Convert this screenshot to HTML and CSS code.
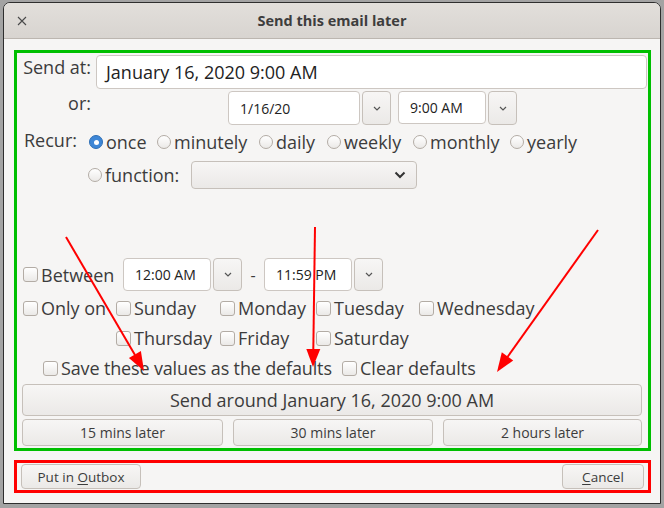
FILE: index.html
```html
<!DOCTYPE html>
<html>
<head>
<meta charset="utf-8">
<link rel="stylesheet" href="styles.css">
</head>
<body>
<div class="window">
  <div class="titlebar">
    <svg class="close" width="10" height="10" viewBox="0 0 10 10"><path d="M1 1L9 9M9 1L1 9" stroke="#4a4a4a" stroke-width="1.1" fill="none"/></svg>
    <span class="title">Send this email later</span>
  </div>
  <div class="content">
    <div class="green">
      <div class="row r-send">
        <div class="lbl">Send at:</div>
        <div class="entry big">January 16, 2020 9:00 AM</div>
      </div>
      <div class="row r-or">
        <div class="lbl">or:</div>
        <div class="pickers">
          <div class="entry small w-date">1/16/20</div>
          <div class="btn drop"><svg width="8" height="5" viewBox="0 0 8 5"><polyline points="1,1 4,4 7,1" fill="none" stroke="#555" stroke-width="1.2"/></svg></div>
          <div class="entry small w-time t-gap">9:00 AM</div>
          <div class="btn drop"><svg width="8" height="5" viewBox="0 0 8 5"><polyline points="1,1 4,4 7,1" fill="none" stroke="#555" stroke-width="1.2"/></svg></div>
        </div>
      </div>
      <div class="row r-recur">
        <div class="lbl-left">Recur:</div>
        <div class="radios">
          <label class="opt w-once"><span class="radio on"></span>once</label>
          <label class="opt w-minutely"><span class="radio"></span>minutely</label>
          <label class="opt w-daily"><span class="radio"></span>daily</label>
          <label class="opt w-weekly"><span class="radio"></span>weekly</label>
          <label class="opt w-monthly"><span class="radio"></span>monthly</label>
          <label class="opt"><span class="radio"></span>yearly</label>
        </div>
      </div>
      <div class="row r-func">
        <label class="opt w-func"><span class="radio"></span>function:</label>
        <div class="btn combo"><svg width="12" height="8" viewBox="0 0 12 8"><polyline points="1.5,1.5 6,6 10.5,1.5" fill="none" stroke="#333" stroke-width="2"/></svg></div>
      </div>
      <div class="row r-between">
        <label class="opt w-between"><span class="check"></span>Between</label>
        <div class="entry small w-time">12:00 AM</div>
        <div class="btn drop"><svg width="8" height="5" viewBox="0 0 8 5"><polyline points="1,1 4,4 7,1" fill="none" stroke="#555" stroke-width="1.2"/></svg></div>
        <span class="dash">-</span>
        <div class="entry small w-time">11:59 PM</div>
        <div class="btn drop"><svg width="8" height="5" viewBox="0 0 8 5"><polyline points="1,1 4,4 7,1" fill="none" stroke="#555" stroke-width="1.2"/></svg></div>
      </div>
      <div class="days">
        <label class="opt"><span class="check"></span>Only on</label>
        <label class="opt"><span class="check"></span>Sunday</label>
        <label class="opt"><span class="check"></span>Monday</label>
        <label class="opt"><span class="check"></span>Tuesday</label>
        <label class="opt"><span class="check"></span>Wednesday</label>
        <span></span>
        <label class="opt"><span class="check"></span>Thursday</label>
        <label class="opt"><span class="check"></span>Friday</label>
        <label class="opt"><span class="check"></span>Saturday</label>
        <span></span>
      </div>
      <div class="row r-save">
        <label class="opt w-save"><span class="check"></span>Save these values as the defaults</label>
        <label class="opt"><span class="check"></span>Clear defaults</label>
      </div>
      <div class="btn send">Send around January 16, 2020 9:00 AM</div>
      <div class="quick">
        <div class="btn q1">15 mins later</div>
        <div class="btn q2">30 mins later</div>
        <div class="btn q3">2 hours later</div>
      </div>
    </div>
    <div class="red">
      <div class="btn foot w-outbox"><span>Put in <u>O</u>utbox</span></div>
      <div class="btn foot w-cancel"><span><u>C</u>ancel</span></div>
    </div>
  </div>
</div>
<svg class="arrows" width="664" height="508" viewBox="0 0 664 508">
  <g stroke="#ff0000" stroke-width="2" fill="none">
    <line x1="66" y1="237" x2="135" y2="355"/>
    <line x1="315" y1="227" x2="313.3" y2="350"/>
    <line x1="598" y1="230" x2="507.5" y2="357"/>
  </g>
  <g fill="#ff0000">
    <polygon points="144,371 128.9,358 140.9,351"/>
    <polygon points="313,367 306.3,348.9 320.3,349.1"/>
    <polygon points="497,372 501.8,352.3 513.2,360.5"/>
  </g>
</svg>
</body>
</html>
```

FILE: styles.css
```css
* { box-sizing: border-box; }
html, body { margin: 0; padding: 0; }
body {
  width: 664px;
  height: 508px;
  overflow: hidden;
  background: #a3a3a3;
  position: relative;
  font-family: "Open Sans", "DejaVu Sans", sans-serif;
  color: #3c3c3c;
}
.window {
  margin: 2px 0 0 3px;
  width: 658px;
  height: 502px;
  border: 1px solid #2e2e2e;
  border-radius: 7px 7px 0 0;
  background: #f6f5f4;
  overflow: hidden;
}
.titlebar {
  height: 36px;
  border-bottom: 1px solid #bcb6b0;
  background: linear-gradient(#e2dfdb, #d8d4d0);
  display: flex;
  align-items: center;
  justify-content: center;
  position: relative;
}
.close {
  position: absolute;
  left: 13px;
  top: 13px;
}
.title {
  font-size: 14.5px;
  font-weight: bold;
  color: #3d3d3d;
}
.content {
  padding: 11px 0 0 10px;
}
.green {
  width: 637px;
  height: 401px;
  border: 3px solid #00bf00;
  display: flex;
  flex-direction: column;
}
.row { display: flex; }
.lbl {
  width: 79px;
  padding-right: 5px;
  text-align: right;
  font-size: 18px;
  line-height: 24px;
  flex: none;
}
.entry {
  background: #fff;
  border: 1px solid #cdc7c2;
  border-radius: 4px;
  color: #222;
  display: flex;
  align-items: center;
}
.big {
  width: 551px;
  height: 34px;
  font-size: 18px;
  padding-left: 9px;
}
.small {
  height: 33px;
  font-size: 14px;
  padding-left: 11px;
}
.r-send { margin-top: 2px; }
.r-or { margin-top: 2px; }
.pickers { display: flex; margin-left: 132px; }
.w-date { width: 132px; height: 34px; }
.w-time { width: 88px; }
.t-gap { margin-left: 7px; }
.btn {
  background: linear-gradient(#f7f6f5, #ebe9e7);
  border: 1px solid #c6c0ba;
  border-radius: 4px;
  display: flex;
  align-items: center;
  justify-content: center;
  color: #3c3c3c;
}
.drop { width: 29px; margin-left: 2px; }
.r-recur { margin-top: 5px; height: 25px; }
.lbl-left {
  width: 72px;
  padding-left: 7px;
  font-size: 18px;
  line-height: 20px;
  flex: none;
}
.radios { display: flex; margin-top: 1px; height: 22px; align-items: center; }
.opt {
  display: flex;
  align-items: center;
  font-size: 18px;
  white-space: nowrap;
  flex: none;
}
.radio {
  width: 14px;
  height: 14px;
  border-radius: 50%;
  border: 1px solid #b3aca5;
  background: linear-gradient(#fff, #ebe9e7);
  margin-right: 3px;
  flex: none;
  position: relative;
}
.radio.on {
  background: #3d86d6;
  border-color: #2f6fb5;
}
.radio.on::after {
  content: "";
  position: absolute;
  left: 3.5px;
  top: 3.5px;
  width: 5px;
  height: 5px;
  border-radius: 50%;
  background: #fff;
}
.check {
  width: 15px;
  height: 15px;
  border-radius: 3px;
  border: 1px solid #b3aca5;
  background: linear-gradient(#fff, #ebe9e7);
  margin-right: 3px;
  flex: none;
}
.w-once { width: 68px; }
.w-minutely { width: 102px; }
.w-daily { width: 68px; }
.w-weekly { width: 86px; }
.w-monthly { width: 97px; }
.r-func { margin-top: 6px; height: 28px; align-items: center; }
.w-func { margin-left: 71px; width: 103px; }
.combo { width: 226px; height: 28px; justify-content: flex-end; padding-right: 10px; }
.r-between { margin-top: 69px; align-items: center; }
.r-between .drop { height: 33px; }
.w-between { margin-left: 6px; width: 100px; }
.dash { width: 22px; text-align: center; font-size: 16px; flex: none; }
.days {
  display: grid;
  grid-template-columns: 93px 104px 96px 103px 1fr;
  grid-auto-rows: 30px;
  margin-top: 2px;
  margin-left: 6px;
  align-items: center;
}
.r-save { height: 30px; align-items: center; }
.w-save { margin-left: 26px; width: 299px; letter-spacing: -0.15px; }
.send {
  margin: 1px 0 0 5px;
  width: 620px;
  height: 32px;
  font-size: 18px;
}
.quick { display: flex; margin: 3px 0 0 5px; height: 27px; }
.quick .btn { font-size: 14px; }
.q1 { width: 201px; }
.q2 { width: 200px; margin-left: 10px; }
.q3 { width: 199px; margin-left: 10px; }
.red {
  margin-top: 9px;
  width: 637px;
  height: 33px;
  border: 3px solid #ff0000;
  display: flex;
  justify-content: space-between;
  padding: 1px 4px 0 4px;
}
.foot { height: 25px; font-size: 13.5px; }
.foot u { text-decoration-thickness: 1px; text-underline-offset: 2px; }
.w-outbox { width: 120px; }
.w-cancel { width: 82px; }
.arrows { position: absolute; left: 0; top: 0; }
```
